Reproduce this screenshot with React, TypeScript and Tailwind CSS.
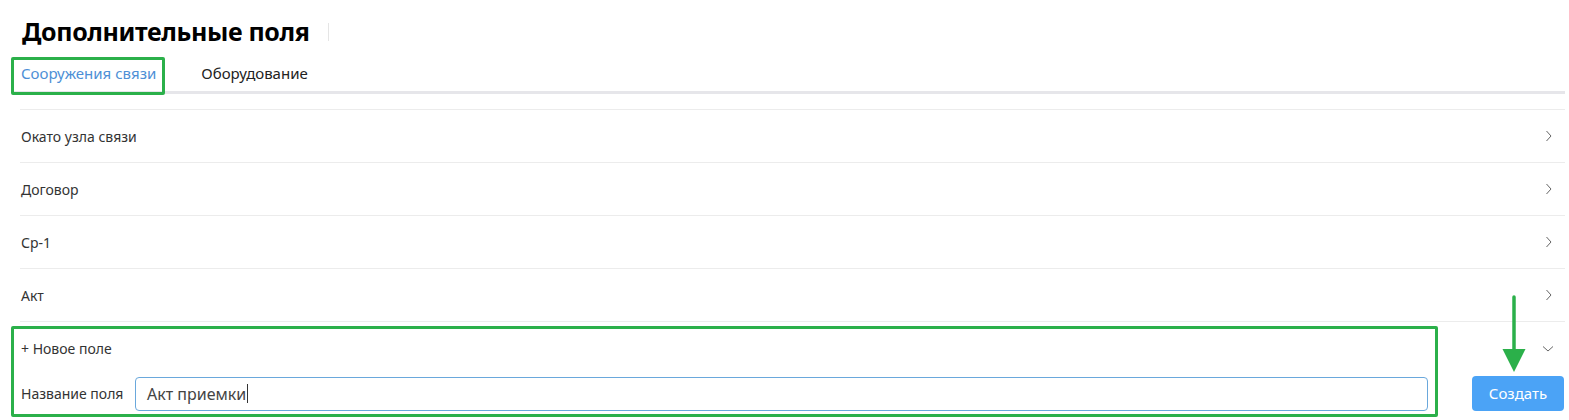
import React from "react";

const Chevron = ({ down = false }: { down?: boolean }) =>
  down ? (
    <svg width="12" height="8" viewBox="0 0 12 8" className="text-[#666]">
      <path d="M1 1.5 L6 6 L11 1.5" fill="none" stroke="currentColor" strokeWidth="1" />
    </svg>
  ) : (
    <svg width="8" height="12" viewBox="0 0 8 12" className="text-[#666]">
      <path d="M1.5 1 L6 6 L1.5 11" fill="none" stroke="currentColor" strokeWidth="1" />
    </svg>
  );

const rows = ["Окато узла связи", "Договор", "Ср-1", "Акт"];

export default function App() {
  return (
    <div
      className="relative w-[1569px] h-[420px] bg-white overflow-hidden text-[#333]"
      style={{ fontFamily: '"Noto Sans", "Open Sans", sans-serif' }}
    >
      <div className="flex items-center pl-[22px] pt-[13px] h-[50px]">
        <h1 className="text-[25px] font-bold text-black leading-none tracking-[-0.35px]">Дополнительные поля</h1>
        <div className="ml-[18px] w-px h-[18px] bg-[#e5e5e5]" />
      </div>
      <div className="ml-[12px] mr-[4px] mt-[7px] flex border-b-[3px] border-[#e6e6ea] h-[37px] pb-[2px]">
        <div className="px-[9px] flex items-center text-[15px] text-[#4d8fd6]">Сооружения связи</div>
        <div className="ml-[27px] px-[9px] flex items-center text-[15px] text-[#222]">Оборудование</div>
      </div>
      <div className="ml-[20px] mr-[4px] mt-[15px] border-t border-[#ececec]">
        {rows.map((r) => (
          <div key={r} className="h-[53px] flex items-center justify-between border-b border-[#ececec] pr-[12px]">
            <span className="text-[14px] pl-[1px]">{r}</span>
            <Chevron />
          </div>
        ))}
        <div className="h-[53px] flex items-center justify-between pr-[11px]">
          <span className="text-[14px] pl-[1px]">+ Новое поле</span>
          <Chevron down />
        </div>
        <div className="flex items-center h-[35px] mt-[1px]">
          <span className="text-[14px] pl-[1px] w-[115px]">Название поля</span>
          <div className="w-[1293px] h-[34px] border border-[#6aa8dc] rounded-[4px] flex items-center px-[11px] text-[16px] text-[#444]">
            Акт приемки<span className="w-px h-[19px] bg-[#333] ml-[1px]" />
          </div>
          <button className="ml-[44px] w-[92px] h-[35px] rounded-[4px] bg-[#4ba3f6] text-white text-[15px]">Создать</button>
        </div>
      </div>

      {/* annotations */}
      <div className="absolute left-[11px] top-[57px] w-[154px] h-[38px] border-[3px] border-[#2bb04a] rounded-[2px]" />
      <div className="absolute left-[11px] top-[326px] w-[1427px] h-[91px] border-[3px] border-[#2bb04a] rounded-[2px]" />
      <svg className="absolute left-[1502px] top-[295px]" width="24" height="78" viewBox="0 0 24 78">
        <line x1="12" y1="2" x2="12" y2="58" stroke="#2bb04a" strokeWidth="3.5" strokeLinecap="round" />
        <path d="M0.5 54 L23.5 54 L12 77 Z" fill="#2bb04a" />
      </svg>
    </div>
  );
}
